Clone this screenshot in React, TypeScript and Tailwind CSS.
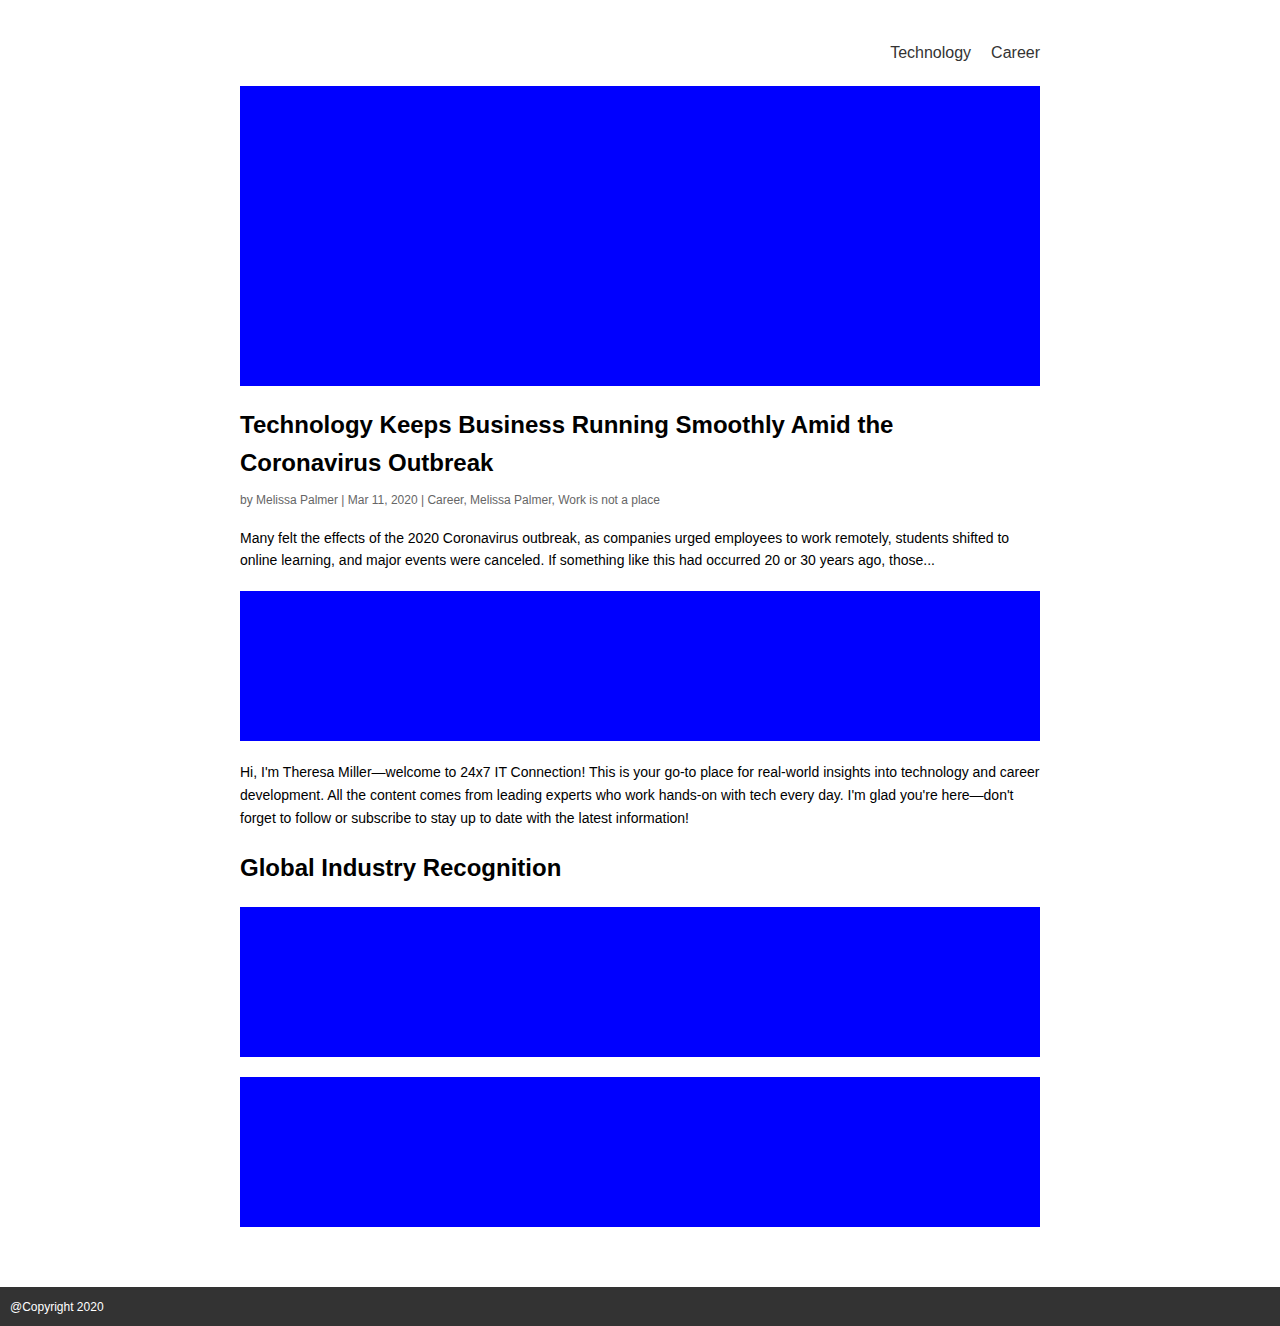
import React from 'react';

const navLinks = ['Technology', 'Career'];

function Block({ tall }: { tall?: boolean }) {
  return <div className={`w-full bg-[#0000ff] ${tall ? 'h-[300px]' : 'h-[150px]'}`} />;
}

export default function App() {
  return (
    <div className="min-h-screen flex flex-col bg-white font-['Liberation_Sans',Arial,sans-serif]">
      {/* Header */}
      <header className="w-[800px] mx-auto pt-[41px] flex justify-end gap-5">
        {navLinks.map((link) => (
          <a key={link} href="#" className="text-base leading-6 text-[#333]">
            {link}
          </a>
        ))}
      </header>

      {/* Main content */}
      <main className="w-[800px] mx-auto mt-[21px] mb-[60px] flex-grow">
        <Block tall />

        <h2 className="mt-5 text-2xl font-bold leading-[38px] text-black">
          Technology Keeps Business Running Smoothly Amid the Coronavirus Outbreak
        </h2>
        <p className="mt-[9px] text-xs leading-[18px] text-[#666]">
          by Melissa Palmer | Mar 11, 2020 | Career, Melissa Palmer, Work is not a place
        </p>
        <p className="mt-[18px] text-sm leading-[22px] text-black">
          Many felt the effects of the 2020 Coronavirus outbreak, as companies urged employees to work remotely,
          students shifted to online learning, and major events were canceled. If something like this had occurred 20
          or 30 years ago, those...
        </p>

        <div className="mt-5">
          <Block />
        </div>

        <p className="mt-5 text-sm leading-[23px] text-black">
          Hi, I'm Theresa Miller—welcome to 24x7 IT Connection! This is your go-to place for real-world insights into
          technology and career development. All the content comes from leading experts who work hands-on with tech
          every day. I'm glad you're here—don't forget to follow or subscribe to stay up to date with the latest
          information!
        </p>

        <h2 className="mt-[19px] text-2xl font-bold leading-[38px] text-black">Global Industry Recognition</h2>

        <div className="mt-5 flex flex-col gap-5">
          <Block />
          <Block />
        </div>
      </main>

      {/* Footer */}
      <footer className="h-[39px] bg-[#333] px-[10px] flex items-center">
        <p className="text-xs text-white">@Copyright 2020</p>
      </footer>
    </div>
  );
}
